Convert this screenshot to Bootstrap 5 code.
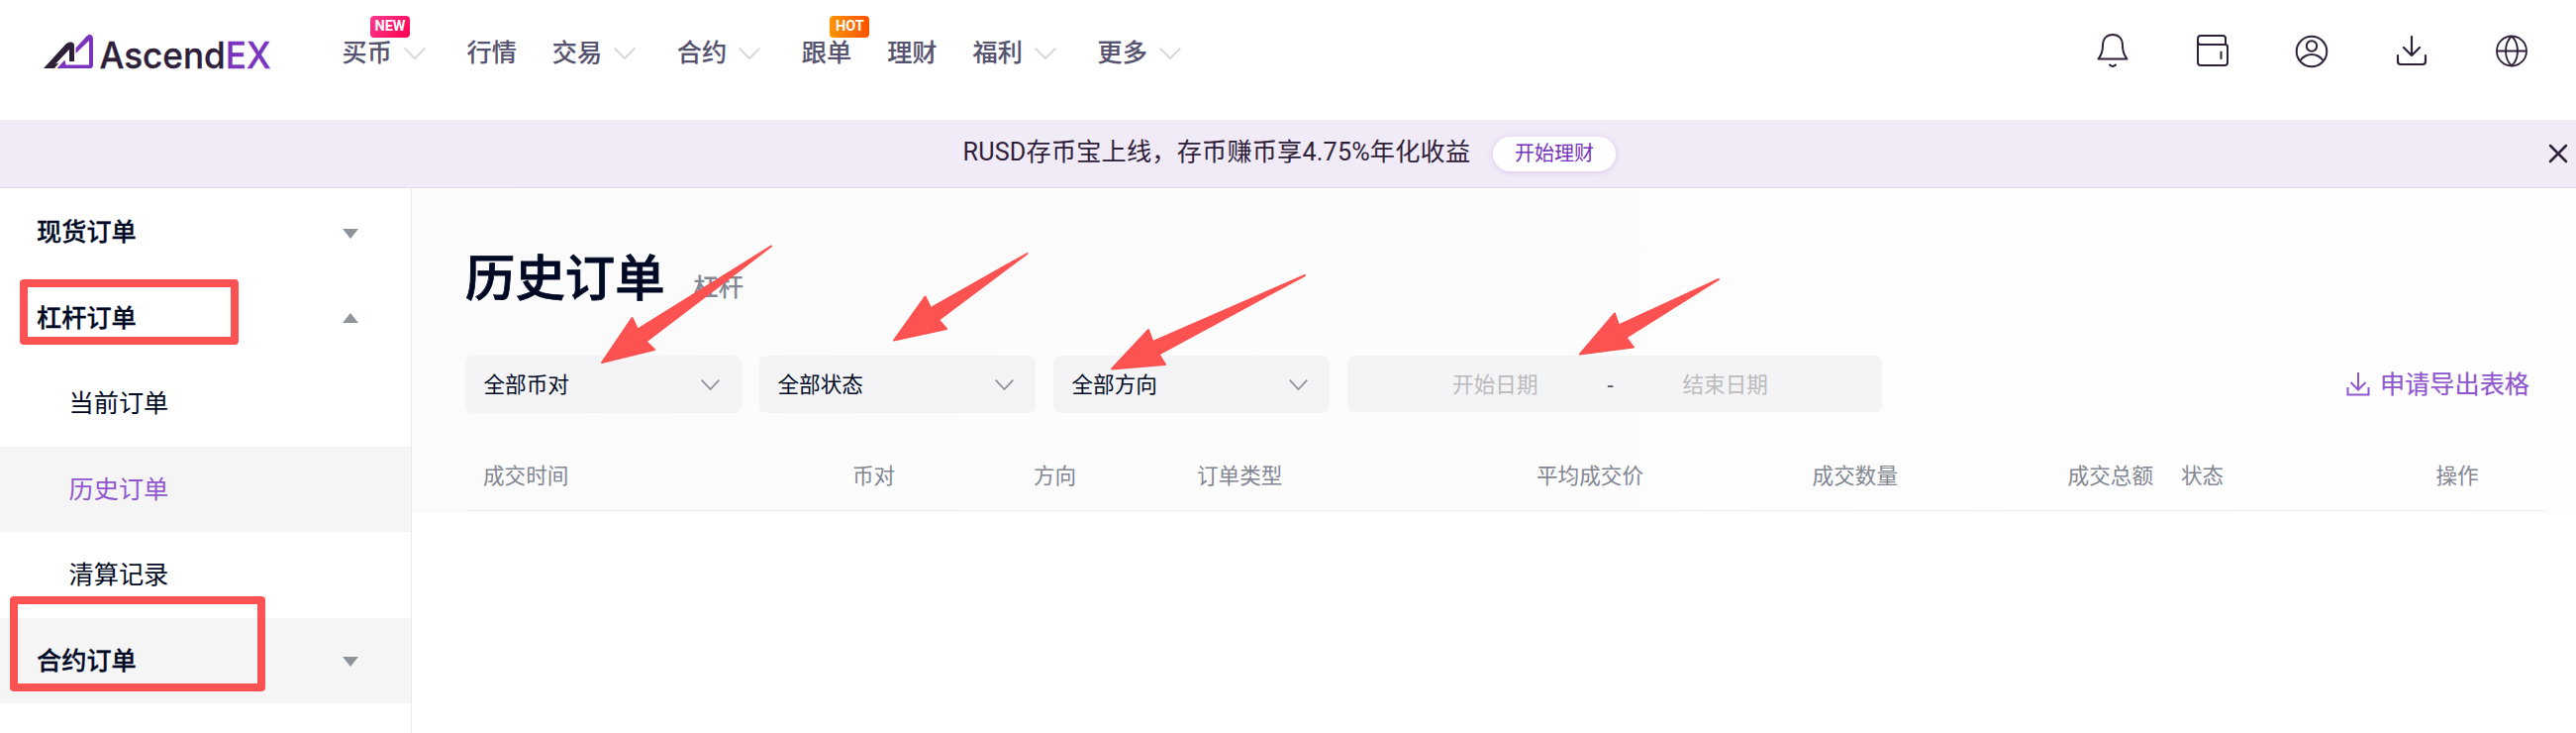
<!DOCTYPE html>
<html lang="zh-CN">
<head>
  <meta charset="UTF-8">
  <meta name="viewport" content="width=device-width, initial-scale=1.0">
  <title>历史订单 | AscendEX</title>
  <link href="https://cdn.jsdelivr.net/npm/bootstrap@5.3.0/dist/css/bootstrap.min.css" rel="stylesheet">
  <style>
    body {
      background-color: #fff;
      color: #000a24;
      font-family: "Liberation Sans", "Noto Sans CJK SC", sans-serif;
      font-size: 25.2px;
      line-height: 36px;
      height: 740px;
      overflow: hidden;
      position: relative;
    }

    svg {
      display: block;
      flex: none;
    }

    a {
      color: inherit;
      text-decoration: none;
    }

    /* Top bar */
    .site-header {
      height: 121px;
      padding: 0 47.5px 0 44px;
    }

    .site-logo {
      margin-top: 24px;
    }

    .main-menu {
      gap: 36px;
      margin: 35px 0 0 70.5px;
      color: #55536f;
      font-weight: 500;
      -webkit-text-stroke: .1px;
    }

    .menu-entry {
      position: relative;
    }

    .menu-entry .caret {
      margin: 2px 5.6px 0 12px;
    }

    .tag {
      position: absolute;
      top: -19px;
      left: 28.5px;
      height: 22px;
      width: 40px;
      border-radius: 4px;
      color: #fff;
      font: bold 14.5px/22px Roboto, sans-serif;
      text-align: center;
      -webkit-text-stroke: 0;
    }

    .tag-new {
      background: linear-gradient(135deg, #ff3b8d, #ff0050);
    }

    .tag-hot {
      background: linear-gradient(90deg, #ff9500, #ff5000);
    }

    .tool-icons {
      gap: 64.6px;
      margin-top: 33px;
    }

    /* Notice strip */
    .notice {
      height: 69px;
      background-color: #f1ebf7;
      border-bottom: 1px solid #dcd9ea;
      color: #2e2039;
      padding-right: 8px;
    }

    .notice-text {
      font-family: Roboto, "Noto Sans CJK SC", sans-serif;
      letter-spacing: .17px;
      margin: -2px 0 0 972.5px;
      width: 535.5px;
    }

    .notice-btn {
      width: 124px;
      height: 35px;
      margin-top: 1px;
      border-radius: 18px;
      background: #fff;
      color: #7533bd;
      font-size: 20px;
      line-height: 35px;
      box-shadow: 0 1px 7px #d9c6ea;
    }

    /* Side menu */
    .side {
      width: 416px;
      height: 550px;
      padding-top: 1px;
      border-right: 1px solid #e9eaec;
      flex: none;
    }

    .side a {
      height: 86.5px;
      padding: 0 53.5px 0 37px;
    }

    .side .group {
      font-weight: 500;
      -webkit-text-stroke: .3px;
    }

    .side .group svg {
      margin-top: 3px;
    }

    .side .sub {
      padding-left: 69.5px;
    }

    .side .shaded {
      background-color: #f5f5f5;
    }

    .side .current {
      color: #9157cf;
    }

    /* Orders */
    .orders {
      height: 328px;
      padding: 0 30px 0 54px;
      background: linear-gradient(90deg, #fbfbfb, #fefefe);
    }

    .page-title {
      margin: 0;
      padding-top: 54px;
      font-size: 50.4px;
      line-height: 76px;
      font-weight: 500;
      -webkit-text-stroke: .8px;
    }

    .page-kind {
      margin: 82px 0 0 29px;
      color: #848894;
      font-weight: 500;
    }

    .filters {
      gap: 18px;
      height: 58px;
      margin-top: 39px;
      font-size: 21.6px;
    }

    .picker {
      width: 279px;
      border-radius: 7px;
      background-color: #f4f4f7;
      padding: 1px 22px 0 18.5px;
    }

    .date-range {
      width: 540px;
      height: 57px;
      border-radius: 7px;
      background-color: #f4f4f7;
      color: #bbb;
      padding: 2px 9px 0 0;
    }

    .date-range .dash {
      width: 146px;
      color: #555;
    }

    .export {
      color: #9157cf;
      font-size: 25.2px;
      gap: 10px;
      padding-right: 17px;
      -webkit-text-stroke: .2px;
    }

    .order-table {
      table-layout: fixed;
      width: 2102px;
      margin-top: 34px;
      color: #828693;
      font-size: 21.6px;
    }

    .order-table th {
      height: 64px;
      padding: 0 10px 3px 18px;
      font-weight: 400;
      vertical-align: middle;
      border-bottom: 1px solid #eeeef1;
    }

    .order-table th.text-center {
      padding: 0 0 3px;
    }

    /* Markup drawn over the page */
    .callouts {
      position: absolute;
      left: 0;
      top: 0;
      pointer-events: none;
    }
  </style>
</head>
<body>
  <header class="site-header d-flex align-items-start">
    <a href="#" class="site-logo">
      <svg width="231" height="60" viewBox="0 -10 231 60">
        <path d="M0 35 22.500 10.500Q25 8 28 8.500 31 9 31 12V28H26V16L12 30.500 15.500 29.500 11 35Z" fill="#2e2039"/>
        <path d="M32.500 20V14.500L43 3Q46 0 48 1.200 50 2 50 5V32Q50 35 47 35H13.500L21.500 26.500 22.500 31.500H46V7Z" fill="#7a35bf"/>
        <text x="56.500" y="35" textLength="173" lengthAdjust="spacingAndGlyphs" font-family="Inter" font-size="37" font-weight="500" stroke-width=".3" fill="#2e2039" stroke="#2e2039">Ascend<tspan fill="#7a35bf" stroke="#7a35bf">EX</tspan></text>
      </svg>
    </a>
    <nav class="main-menu d-flex">
      <a href="#" class="menu-entry d-flex align-items-center">买币<svg class="caret" width="22" height="12" fill="none" stroke="#d5d5d9" stroke-width="1.8"><path d="M.7.700 11 11 21.300.700"/></svg><span class="tag tag-new">NEW</span></a>
      <a href="#" class="menu-entry">行情</a>
      <a href="#" class="menu-entry d-flex align-items-center">交易<svg class="caret" width="22" height="12" fill="none" stroke="#d5d5d9" stroke-width="1.8"><path d="M.7.700 11 11 21.300.700"/></svg></a>
      <a href="#" class="menu-entry d-flex align-items-center">合约<svg class="caret" width="22" height="12" fill="none" stroke="#d5d5d9" stroke-width="1.8"><path d="M.7.700 11 11 21.300.700"/></svg></a>
      <a href="#" class="menu-entry">跟单<span class="tag tag-hot">HOT</span></a>
      <a href="#" class="menu-entry">理财</a>
      <a href="#" class="menu-entry d-flex align-items-center">福利<svg class="caret" width="22" height="12" fill="none" stroke="#d5d5d9" stroke-width="1.8"><path d="M.7.700 11 11 21.300.700"/></svg></a>
      <a href="#" class="menu-entry d-flex align-items-center">更多<svg class="caret" width="22" height="12" fill="none" stroke="#d5d5d9" stroke-width="1.8"><path d="M.7.700 11 11 21.300.700"/></svg></a>
    </nav>
    <div class="tool-icons d-flex ms-auto">
      <svg width="36" height="36" fill="none" stroke="#2e2039" stroke-width="2" stroke-linecap="round" stroke-linejoin="round"><path d="M3.500 26.500H32.500C29 22 28 18 28 13 28 6 24 2 18 2S8 6 8 13C8 18 7 22 3.500 26.500ZM15 32.500Q18 35.500 21 32.500"/></svg>
      <svg width="36" height="36" fill="none" stroke="#2e2039" stroke-width="2" stroke-linecap="round" stroke-linejoin="round"><path d="M31 11V5.500Q31 3 28 3H6Q3 3 3 6V30Q3 33 6 33H30Q33 33 33 30V14Q33 12 30.500 12H6Q3 12 3 9M26.500 19.500V26"/></svg>
      <svg width="36" height="36" fill="none" stroke="#2e2039" stroke-width="2"><circle cx="18" cy="19" r="15.300"/><circle cx="18" cy="13.500" r="5.200"/><path d="M6.500 28Q11 22 18 22T29.500 28"/></svg>
      <svg width="36" height="36" fill="none" stroke="#2e2039" stroke-width="2.200" stroke-linecap="round" stroke-linejoin="round"><path d="M18 4V23M10 15 18 23 26 15M4 23V29Q4 32 7 32H29Q32 32 32 29V23"/></svg>
      <svg width="36" height="36" fill="none" stroke="#2e2039" stroke-width="1.800"><circle cx="18" cy="18.500" r="15"/><path d="M3 18.500H33M18 3.500C10 11 10 26 18 33.500M18 3.500C26 11 26 26 18 33.500"/></svg>
    </div>
  </header>

  <div class="notice d-flex align-items-center">
    <div class="notice-text">RUSD存币宝上线，存币赚币享4.75%年化收益</div>
    <a href="#" class="notice-btn text-center">开始理财</a>
    <svg class="ms-auto" width="20" height="20" stroke="#2e2039" stroke-width="2.500" stroke-linecap="round"><path d="M2 2 18 18M18 2 2 18"/></svg>
  </div>

  <div class="d-flex align-items-start">
    <aside class="side">
      <a href="#" class="group d-flex align-items-center justify-content-between">现货订单<svg width="16" height="10" fill="#8f939a"><path d="M0 0H16L8 10Z"/></svg></a>
      <a href="#" class="group d-flex align-items-center justify-content-between">杠杆订单<svg class="mt-0" width="16" height="10" fill="#8f939a"><path d="M0 10H16L8 0Z"/></svg></a>
      <a href="#" class="sub d-flex align-items-center">当前订单</a>
      <a href="#" class="sub shaded current d-flex align-items-center">历史订单</a>
      <a href="#" class="sub d-flex align-items-center">清算记录</a>
      <a href="#" class="group shaded d-flex align-items-center justify-content-between">合约订单<svg width="16" height="10" fill="#8f939a"><path d="M0 0H16L8 10Z"/></svg></a>
    </aside>

    <main class="orders flex-grow-1">
      <div class="d-flex align-items-start">
        <h1 class="page-title">历史订单</h1>
        <span class="page-kind">杠杆</span>
      </div>

      <div class="filters d-flex">
        <div class="picker d-flex align-items-center justify-content-between">全部币对<svg width="19" height="11" fill="none" stroke="#8a8e99" stroke-width="1.700"><path d="M.7.700 9.500 10 18.300.700"/></svg></div>
        <div class="picker d-flex align-items-center justify-content-between">全部状态<svg width="19" height="11" fill="none" stroke="#8a8e99" stroke-width="1.700"><path d="M.7.700 9.500 10 18.300.700"/></svg></div>
        <div class="picker d-flex align-items-center justify-content-between">全部方向<svg width="19" height="11" fill="none" stroke="#8a8e99" stroke-width="1.700"><path d="M.7.700 9.500 10 18.300.700"/></svg></div>
        <div class="date-range d-flex align-items-center justify-content-center">
          <span>开始日期</span><span class="dash text-center">-</span><span>结束日期</span>
        </div>
        <a href="#" class="export d-flex align-items-center ms-auto">
          <svg width="24" height="24" fill="none" stroke="#9157cf" stroke-width="2"><path d="M12 0V17M4.500 10 12 17.500 19.500 10M1.500 15V22.500H22.500V15"/></svg>申请导出表格
        </a>
      </div>

      <table class="order-table">
        <colgroup>
          <col style="width:373px"><col style="width:183px"><col style="width:165px"><col style="width:229px"><col style="width:250px"><col style="width:257px"><col style="width:258px"><col style="width:207px"><col style="width:180px">
        </colgroup>
        <thead>
          <tr>
            <th>成交时间</th>
            <th>币对</th>
            <th>方向</th>
            <th>订单类型</th>
            <th class="text-end">平均成交价</th>
            <th class="text-end">成交数量</th>
            <th class="text-end">成交总额</th>
            <th>状态</th>
            <th class="text-center">操作</th>
          </tr>
        </thead>
      </table>
    </main>
  </div>

  <svg class="callouts" width="2602" height="740">
    <g fill="none" stroke="#fc5252" stroke-width="8" stroke-linejoin="round">
      <rect x="24" y="286" width="213" height="58"/>
      <rect x="14" y="606" width="250" height="88"/>
    </g>
    <g fill="#fc5252" stroke="#fc5252" stroke-width="2" stroke-linejoin="round">
      <path d="M608 366 638.500 321 644 332.500 779 248.500 652.500 344.700 661 353Z"/>
      <path d="M903 343.500 934.500 299.500 940 311 1037.500 256 948 323 956 332Z"/>
      <path d="M1123 372.500 1160 333 1164.500 345 1318 278 1170.500 357.500 1177 368Z"/>
      <path d="M1596 357.500 1631 316.500 1635 328.500 1736 282 1642.500 340.700 1650 350.500Z"/>
    </g>
  </svg>

  <script src="https://cdn.jsdelivr.net/npm/bootstrap@5.3.0/dist/js/bootstrap.bundle.min.js"></script>
</body>
</html>
